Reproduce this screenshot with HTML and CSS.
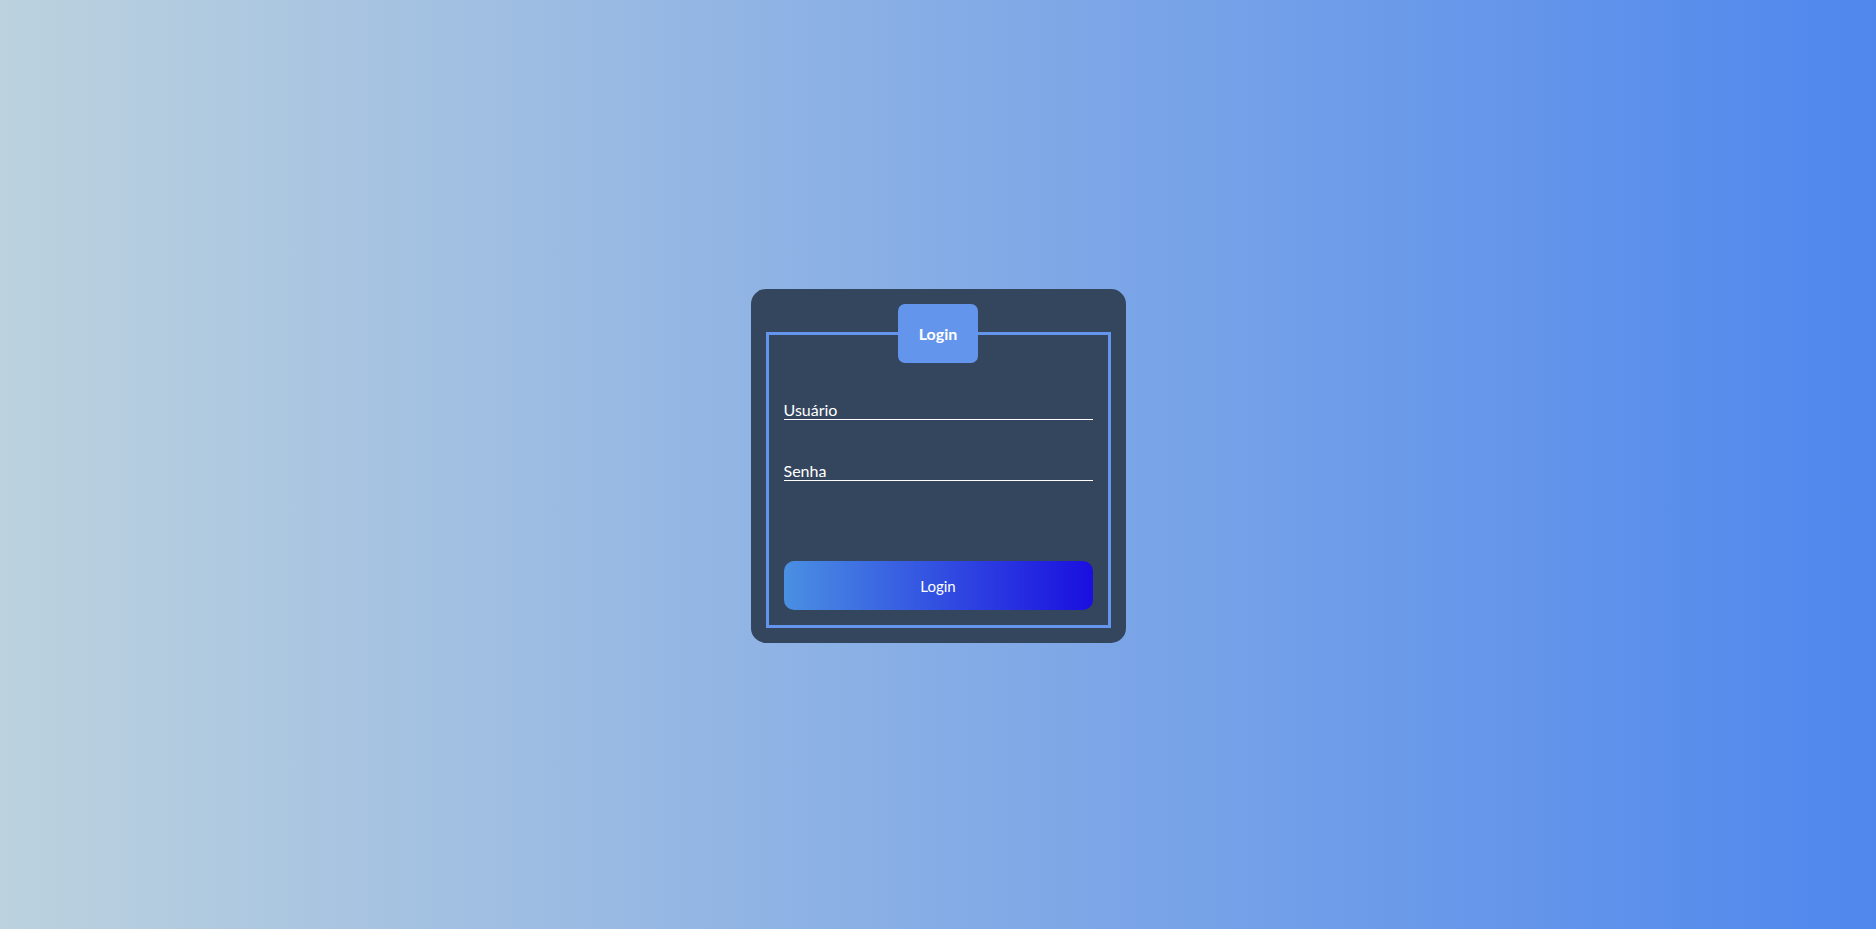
FILE: index.html
```html
<!DOCTYPE html>
<html lang="pt-BR">
<head>
<meta charset="utf-8">
<title>Login</title>
<link rel="stylesheet" href="styles.css">
</head>
<body>
<main class="page">
  <form class="card">
    <fieldset class="frame">
      <legend class="frame-title">Login</legend>
      <input class="field field-user" type="text" placeholder="Usuário">
      <input class="field field-pass" type="password" placeholder="Senha">
      <button class="submit" type="button">Login</button>
    </fieldset>
  </form>
</main>
</body>
</html>
```
FILE: styles.css
```css
* { box-sizing: border-box; }
html, body { height: 100%; }
body {
  margin: 0;
  font-family: Lato, "Open Sans", sans-serif;
  background: linear-gradient(to right, #bcd2de, #4f87ed);
}
.page {
  height: 100%;
  display: flex;
  align-items: center;
  justify-content: center;
  padding-top: 3px;
}
.card {
  width: 375px;
  padding: 15px;
  background: #34455e;
  border-radius: 15px;
}
.frame {
  margin: 0;
  min-width: 0;
  border: 3px solid #6495ed;
  padding: 0 15px 15px;
  display: flex;
  flex-direction: column;
}
.frame-title {
  margin: 0 auto;
  padding: 20px 21px;
  background: #6495ed;
  color: #fff;
  font-weight: 700;
  font-size: 16px;
  line-height: 19px;
  border-radius: 7px;
}
.field {
  display: block;
  width: 100%;
  height: 20px;
  padding: 0;
  border: 0;
  border-bottom: 1px solid #fff;
  background: transparent;
  color: #fff;
  font-family: inherit;
  font-size: 16px;
  outline: none;
}
.field::placeholder { color: #fff; opacity: 1; }
.field-user { margin-top: 37px; }
.field-pass { margin-top: 41px; }
.submit {
  margin-top: 80px;
  height: 49px;
  width: 100%;
  border: 0;
  border-radius: 10px;
  background: linear-gradient(to right, #4a90e2, #1a0ee0);
  color: #fff;
  font-family: inherit;
  font-size: 15px;
  cursor: pointer;
}
```
